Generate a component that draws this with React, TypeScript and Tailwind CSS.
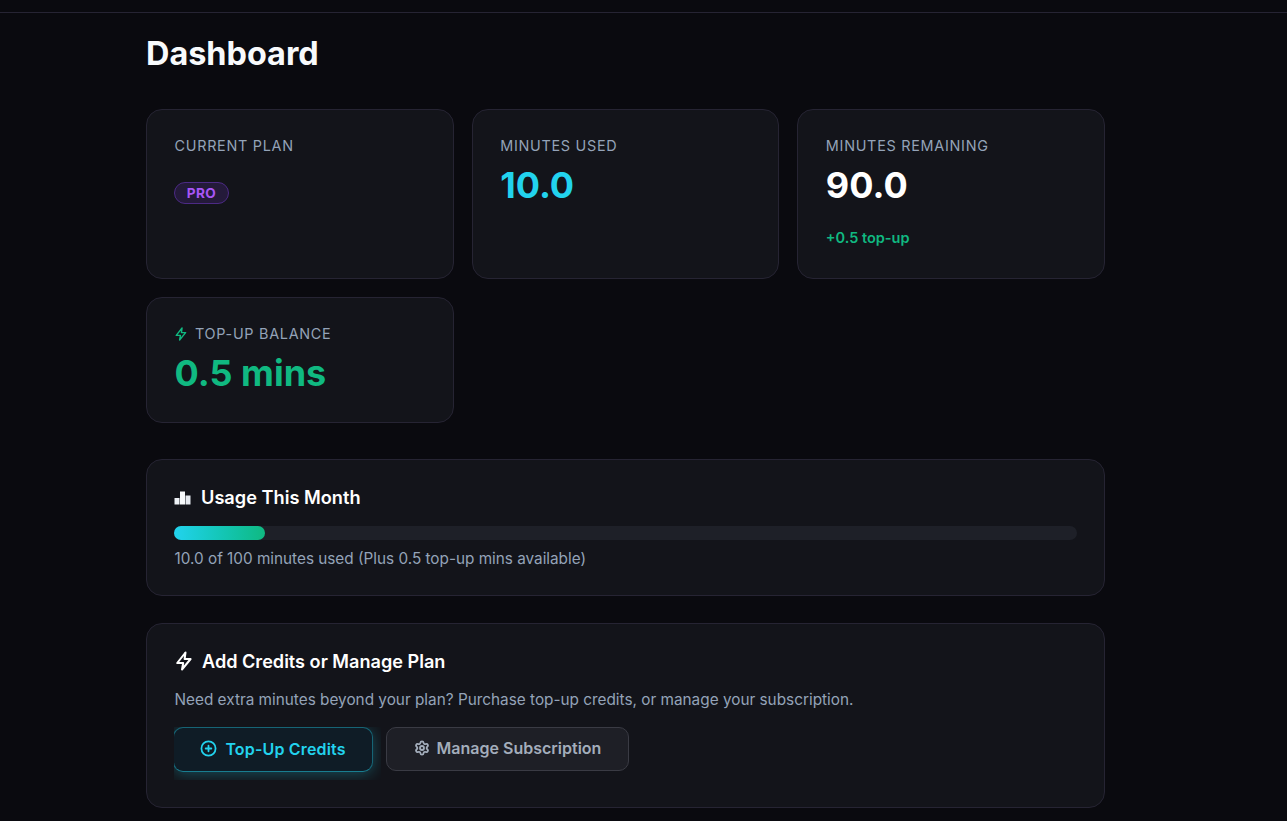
import React from 'react';
import { CirclePlus, Settings } from 'lucide-react';

const card = 'rounded-2xl border border-[#262433] bg-[#13141a]';
const label = 'text-[14.4px] tracking-[0.05em] uppercase text-[#94a3b8] leading-[20px]';

function StatCard({ children, height }: { children: React.ReactNode; height: string }) {
  return <div className={`${card} ${height} px-[27.5px] pt-[26px]`}>{children}</div>;
}

function BoltIcon({ className }: { className: string }) {
  return (
    <svg viewBox="0 0 20 20" fill="none" stroke="currentColor" strokeWidth="2" strokeLinejoin="round" className={`shrink-0 ${className}`}>
      <path d="M11.5 1.5 L3.2 12 H9.2 L8 18.5 L16.6 8 H10.6 Z" />
    </svg>
  );
}

function ChartIcon() {
  return (
    <svg width="17" height="16" viewBox="0 0 17 16" className="shrink-0">
      <path d="M0.5 14.5V8H5.5V14.5Z" fill="#eef2f7" />
      <path d="M6 14.5V1.5H11V14.5Z" fill="#f8fafc" />
      <path d="M11.5 14.5V5.5H16.5V14.5Z" fill="#e6eaf0" />
    </svg>
  );
}

export default function App() {
  return (
    <div className="min-h-[821px] bg-[#0a0a0f] font-['Inter',sans-serif] text-white overflow-hidden">
      <div className="h-[13px] border-b border-[#262433]" />
      <main className="mx-[146px] w-[959px]">
        <h1 className="mt-[21px] text-[32.4px] leading-[40px] font-bold text-[#f8fafc]">Dashboard</h1>

        <div className="mt-[35px] grid grid-cols-3 gap-[18px]">
          <StatCard height="h-[170px]">
            <div className={label}>Current Plan</div>
            <span className="-ml-[0.5px] mt-[26px] inline-flex h-[22px] w-[55px] items-center justify-center rounded-full border border-[#4c2a85] bg-[#241a3a] text-[13.6px] font-bold tracking-[0.03em] text-[#a855f7]">
              PRO
            </span>
          </StatCard>
          <StatCard height="h-[170px]">
            <div className={label}>Minutes Used</div>
            <div className="mt-[9px] text-[36px] leading-[40px] font-bold text-[#22d3ee]">10.0</div>
          </StatCard>
          <StatCard height="h-[170px]">
            <div className={label}>Minutes Remaining</div>
            <div className="mt-[9px] text-[36px] leading-[40px] font-bold text-white">90.0</div>
            <div className="mt-[23px] text-[14.5px] leading-[19px] font-semibold text-[#10b981]">+0.5 top-up</div>
          </StatCard>
          <StatCard height="h-[126px]">
            <div className={`${label} -ml-[0.5px] flex items-center gap-[7px]`}>
              <BoltIcon className="h-[14px] w-[14px] text-[#10b981]" />
              Top-Up Balance
            </div>
            <div className="mt-[9px] text-[36px] leading-[40px] font-bold text-[#10b981]">0.5 mins</div>
          </StatCard>
        </div>

        <section className={`${card} mt-[36px] h-[137px] px-[27px] pt-[27px]`}>
          <h2 className="flex items-center gap-[10px] text-[18.2px] leading-[21px] font-semibold text-white">
            <ChartIcon />
            Usage This Month
          </h2>
          <div className="mt-[18px] h-[14px] rounded-full bg-[#1e2028]">
            <div className="h-full w-[91px] rounded-full bg-gradient-to-r from-[#22d3ee] to-[#10b981]" />
          </div>
          <p className="mt-[9px] pl-[0.5px] text-[15.3px] leading-[20px] text-[#94a3b8]">
            10.0 of 100 minutes used (Plus 0.5 top-up mins available)
          </p>
        </section>

        <section className={`${card} mt-[27px] h-[185px] px-[27px] pt-[25px]`}>
          <h2 className="flex items-center gap-[8px] text-[18.1px] leading-[24px] font-semibold text-white">
            <BoltIcon className="h-[20px] w-[20px]" />
            Add Credits or Manage Plan
          </h2>
          <p className="mt-[17px] pl-[0.5px] text-[15.33px] leading-[20px] text-[#94a3b8]">
            Need extra minutes beyond your plan? Purchase top-up credits, or manage your subscription.
          </p>
          <div className="mt-[17px] flex items-start gap-[12px]">
            <div className="-mr-[7px] h-[53px] w-[207px] shrink-0 overflow-hidden">
              <button className="-ml-px flex h-[45px] w-[200px] items-center justify-center gap-[8px] rounded-[10px] border border-[#22d3ee66] border-b-[#22d3ee88] bg-[#0f1c26] pb-[2px] text-[16px] font-semibold tracking-[0.01em] text-[#22d3ee] shadow-[0_2px_15px_rgba(34,211,238,0.3)]">
                <CirclePlus className="h-[17px] w-[17px]" strokeWidth={2.5} />
                Top-Up Credits
              </button>
            </div>
            <button className="flex h-[44px] w-[243px] items-center justify-center gap-[7px] rounded-[10px] border border-[#3a3b44] bg-[#1e1f26] pb-[2px] text-[16px] font-semibold text-[#a3adbb]">
              <Settings className="h-[16px] w-[16px]" strokeWidth={2.75} />
              Manage Subscription
            </button>
          </div>
        </section>
      </main>
    </div>
  );
}
